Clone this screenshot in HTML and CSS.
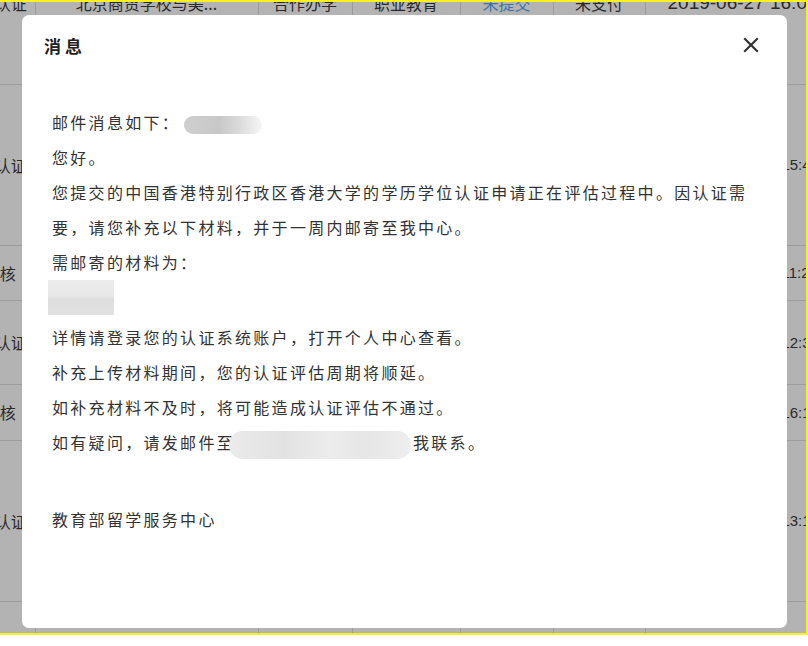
FILE: index.html
```html
<!DOCTYPE html>
<html lang="zh-CN">
<head>
  <meta charset="UTF-8">
  <meta name="viewport" content="width=device-width, initial-scale=1.0">
  <title>消息</title>
  <link rel="stylesheet" href="styles.css">
</head>
<body>
  <div class="frame">
    <!-- 背景列表（被遮罩） -->
    <table class="list">
      <colgroup>
        <col class="c1"><col class="c2"><col class="c3"><col class="c4"><col class="c5"><col class="c6"><col class="c7">
      </colgroup>
      <tr class="r-tall">
        <td>未认证</td><td>北京商贸学校与美...</td><td>合作办学</td><td>职业教育</td><td class="link">未提交</td><td>未支付</td><td class="time first">2019-06-27 16:05:12</td>
      </tr>
      <tr class="r-tall">
        <td>未认证</td><td>香港大学</td><td>境外学历</td><td>高等教育</td><td class="link">已提交</td><td>已支付</td><td class="time">2019-06-25 15:41:08</td>
      </tr>
      <tr class="r-short">
        <td class="audit">审核</td><td>香港大学</td><td>境外学历</td><td>高等教育</td><td class="link">已提交</td><td>已支付</td><td class="time">2019-06-21 11:23:40</td>
      </tr>
      <tr class="r-mid">
        <td>未认证</td><td>香港大学</td><td>境外学历</td><td>高等教育</td><td class="link">已提交</td><td>已支付</td><td class="time">2019-06-20 12:37:19</td>
      </tr>
      <tr class="r-short2">
        <td class="audit">审核</td><td>香港大学</td><td>境外学历</td><td>高等教育</td><td class="link">已提交</td><td>已支付</td><td class="time">2019-06-18 16:14:52</td>
      </tr>
      <tr class="r-tall">
        <td>未认证</td><td>香港大学</td><td>境外学历</td><td>高等教育</td><td class="link">已提交</td><td>已支付</td><td class="time">2019-06-12 13:18:27</td>
      </tr>
      <tr class="r-last">
        <td>未认证</td><td>香港大学</td><td>境外学历</td><td>高等教育</td><td class="link">已提交</td><td>已支付</td><td class="time">2019-06-10 09:02:44</td>
      </tr>
    </table>

    <!-- 消息弹窗 -->
    <div class="modal">
      <div class="modal-head">
        <span class="modal-title">消息</span>
        <span class="modal-close">
          <svg width="16" height="16" viewBox="0 0 16 16">
            <path d="M2 2 L14 14 M14 2 L2 14" stroke="#333" stroke-width="2.2" stroke-linecap="square"/>
          </svg>
        </span>
      </div>
      <div class="modal-body">
        <p>邮件消息如下：<span class="mask mask-name"></span></p>
        <p>您好。</p>
        <p>您提交的中国香港特别行政区香港大学的学历学位认证申请正在评估过程中。因认证需要，请您补充以下材料，并于一周内邮寄至我中心。</p>
        <p>需邮寄的材料为：</p>
        <div class="mask mask-block"></div>
        <p>详情请登录您的认证系统账户，打开个人中心查看。</p>
        <p>补充上传材料期间，您的认证评估周期将顺延。</p>
        <p>如补充材料不及时，将可能造成认证评估不通过。</p>
        <p>如有疑问，请发邮件至<span class="mask mask-mail"></span>我联系。</p>
        <p class="sign">教育部留学服务中心</p>
      </div>
    </div>
  </div>
</body>
</html>
```

FILE: styles.css
```css
body {
  margin: 0;
  background: #fff;
  font-family: "Noto Sans CJK SC", "Noto Sans", sans-serif;
}

.frame {
  position: relative;
  width: 806px;
  height: 631px;
  border: 2px solid #fbf11c;
  border-left: 0;
  background: #b3b3b3;
  overflow: hidden;
}

/* 背景表格 */
.list {
  border-collapse: collapse;
  table-layout: fixed;
  width: 874px;
  margin-left: -29px;
  margin-top: -79px;
  font-size: 16px;
  color: #2a2a2a;
}

.list col.c1 { width: 64px; }
.list col.c2 { width: 223px; }
.list col.c3 { width: 94px; }
.list col.c4 { width: 108px; }
.list col.c5 { width: 93px; }
.list col.c6 { width: 92px; }
.list col.c7 { width: 200px; }

.list td {
  border-left: 1px solid #9c9c9c;
  border-bottom: 1px solid #9c9c9c;
  text-align: center;
  white-space: nowrap;
  overflow: hidden;
  padding: 0;
}

.list td:first-child { border-left: 0; }

.list td.audit { padding-right: 6px; }

.list td.link { color: #3f73a8; }

.list td.time {
  text-align: left;
  padding-left: 55px;
  font-family: "Liberation Sans", sans-serif;
  font-size: 15px;
}

.list td.time.first {
  padding-left: 22px;
  font-size: 19px;
}

.r-tall { height: 161px; }
.r-short { height: 55px; }
.r-mid { height: 84px; }
.r-short2 { height: 56px; }
.r-last { height: 80px; }

/* 弹窗 */
.modal {
  position: absolute;
  left: 22px;
  top: 13px;
  width: 765px;
  height: 613px;
  background: #fff;
  border-radius: 7px;
}

.modal-head {
  display: flex;
  align-items: center;
  justify-content: space-between;
  height: 60px;
  padding: 0 28px 0 22px;
}

.modal-title {
  font-size: 17px;
  font-weight: bold;
  letter-spacing: 4px;
  color: #222;
}

.modal-close {
  display: flex;
  width: 16px;
  height: 16px;
}

.modal-body {
  width: 700px;
  padding: 30px 0 0 30px;
  font-size: 16px;
  letter-spacing: 2.3px;
  line-height: 35px;
  color: #333;
}

.modal-body p {
  margin: 0;
}

.modal-body .sign {
  margin-top: 42px;
}

/* 打码区域 */
.mask {
  display: inline-block;
  vertical-align: middle;
}

.mask-name {
  width: 78px;
  height: 18px;
  margin-left: 4px;
  border-radius: 9px;
  background: linear-gradient(90deg, #cfcfcf 0%, #c8c8c8 45%, #dadada 70%, #f6f6f6 100%);
}

.mask-block {
  display: block;
  width: 66px;
  height: 35px;
  margin: 0 0 5px -4px;
  background: linear-gradient(180deg, #ececec 0%, #e8e8e8 45%, #dedede 55%, #e2e2e2 100%);
}

.mask-mail {
  width: 182px;
  height: 28px;
  margin: 0 2px 0 -6px;
  border-radius: 14px;
  background: linear-gradient(90deg, #ebebeb 0%, #e2e2e2 30%, #ececec 55%, #e6e6e6 75%, #eeeeee 100%);
}
```
